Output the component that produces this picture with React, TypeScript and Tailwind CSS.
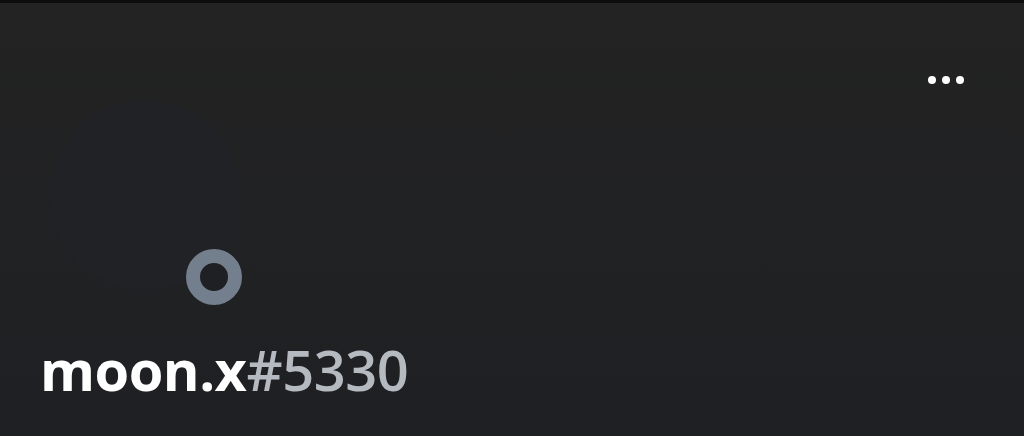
export default function App() {
  return (
    <div className="flex h-[436px] w-[1024px] flex-col overflow-hidden bg-gradient-to-b from-[#232323] to-[#1f2023] font-['Open_Sans',sans-serif]">
      <div className="h-[3px] bg-[#0d0d0d]" />

      <div className="mt-[73px] flex justify-end gap-[6px] pr-[60px]">
        <span className="h-[8px] w-[8px] rounded-full bg-white" />
        <span className="h-[8px] w-[8px] rounded-full bg-white" />
        <span className="h-[8px] w-[8px] rounded-full bg-white" />
      </div>

      <div className="relative ml-[50px] mt-[16px] h-[190px] w-[190px] rounded-full bg-[#212225]">
        <span className="absolute left-[136px] top-[149px] h-[56px] w-[56px] rounded-full border-[14px] border-[#747f8d] bg-[#1f2023]" />
      </div>

      <div className="ml-[40px] mt-[51px] text-[56px] font-bold leading-none tracking-[-0.5px]">
        <span className="text-white">moon.x</span>
        <span className="font-semibold text-[#b5bac1]">#5330</span>
      </div>
    </div>
  );
}
